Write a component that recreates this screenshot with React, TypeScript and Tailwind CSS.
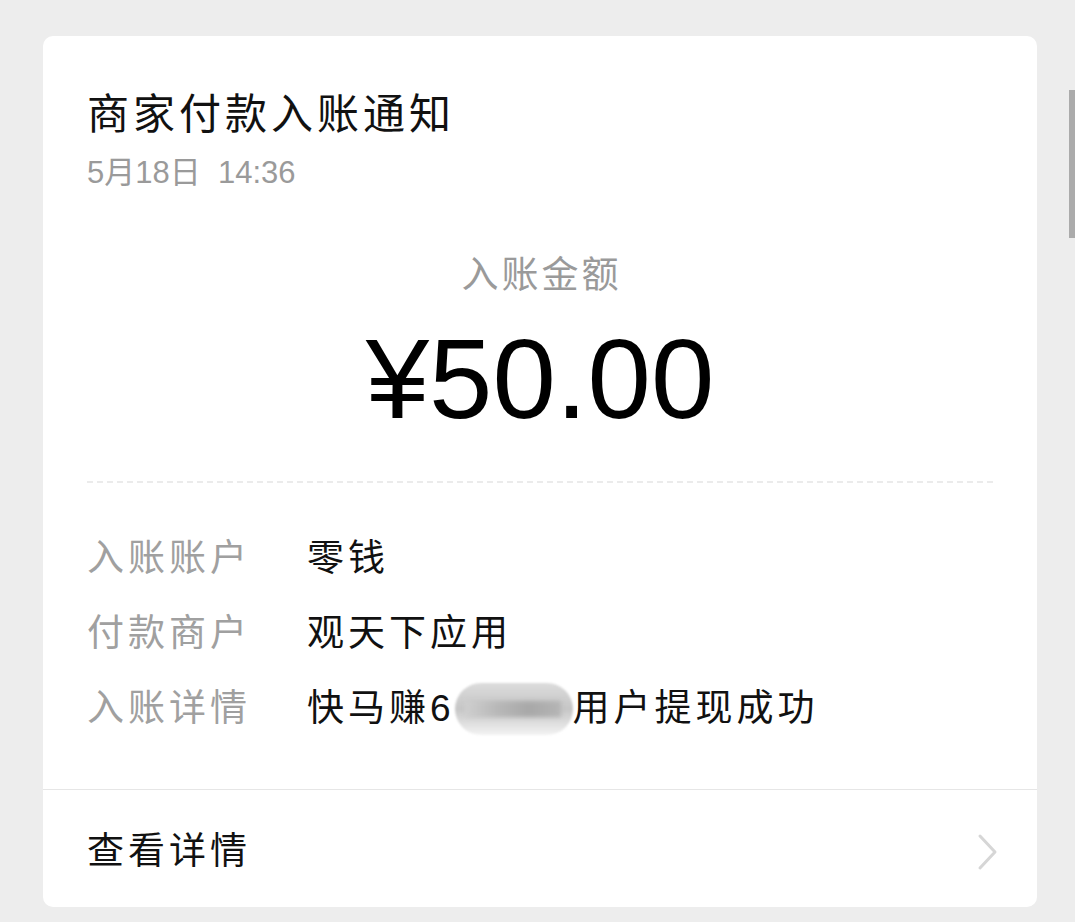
const cjk = "font-['Liberation_Sans','Noto_Sans_CJK_SC',sans-serif]";

const rows = [
  { label: "入账账户", value: "零钱" },
  { label: "付款商户", value: "观天下应用" },
];

function BlurredId() {
  return (
    <span className="relative inline-block h-[52px] w-[118px] align-middle">
      <span className="absolute inset-0 rounded-[26px] bg-[linear-gradient(180deg,#dcdcdc_0%,#c6c6c6_50%,#f3f3f3_100%)] blur-[1px]" />
      <span className="absolute left-[10px] top-[18px] h-[16px] w-[96px] bg-[linear-gradient(90deg,#cfcfcf,#b8b8b8,#a8a8a8,#b5b5b5)] blur-[2px]" />
    </span>
  );
}

export default function App() {
  return (
    <div className={`relative h-[922px] w-[1075px] overflow-hidden bg-[#ededed] pl-[43px] pt-[36px] ${cjk}`}>
      <div className="w-[994px] rounded-[10px] bg-white">
        <div className="px-[44px] pt-[54px]">
          <h1 className="text-[42px] leading-[50px] tracking-[4px] text-[#111]">商家付款入账通知</h1>
          <p className="mt-[15px] text-[31px] leading-[36px] text-[#9a9a9a]">5月18日&nbsp; 14:36</p>

          <div className="mt-[63px] flex flex-col items-center">
            <p className="pl-[3px] text-[37px] leading-[44px] tracking-[3px] text-[#9a9a9a]">入账金额</p>
            <p className="mt-[23px] text-[114px] leading-[116px] text-black">¥50.00</p>
          </div>

          <div className="mt-[44px] border-t-2 border-dashed border-[#ebebeb]" />

          <div className="pb-[43px] pt-[38px]">
            {rows.map((row) => (
              <div key={row.label} className="flex h-[75px] items-center text-[37px] tracking-[4px]">
                <span className="w-[220px] text-[#a0a0a0]">{row.label}</span>
                <span className="text-[#111]">{row.value}</span>
              </div>
            ))}
            <div className="flex h-[75px] items-center text-[37px] tracking-[4px]">
              <span className="w-[220px] text-[#a0a0a0]">入账详情</span>
              <span className="flex items-center text-[#111]">
                快马赚6
                <BlurredId />
                用户提现成功
              </span>
            </div>
          </div>
        </div>

        <div className="flex h-[118px] items-center justify-between border-t border-[#e6e6e6] pl-[44px] pr-[38px] pt-[6px]">
          <span className="text-[37px] tracking-[4px] text-[#111]">查看详情</span>
          <svg width="22" height="38" viewBox="0 0 22 38" fill="none">
            <path d="M3 3l15 16L3 35" stroke="#d6d6d6" strokeWidth="3" strokeLinecap="round" strokeLinejoin="round" />
          </svg>
        </div>
      </div>

      <div className="absolute right-0 top-[90px] h-[148px] w-[6px] bg-[#ababab]" />
    </div>
  );
}
